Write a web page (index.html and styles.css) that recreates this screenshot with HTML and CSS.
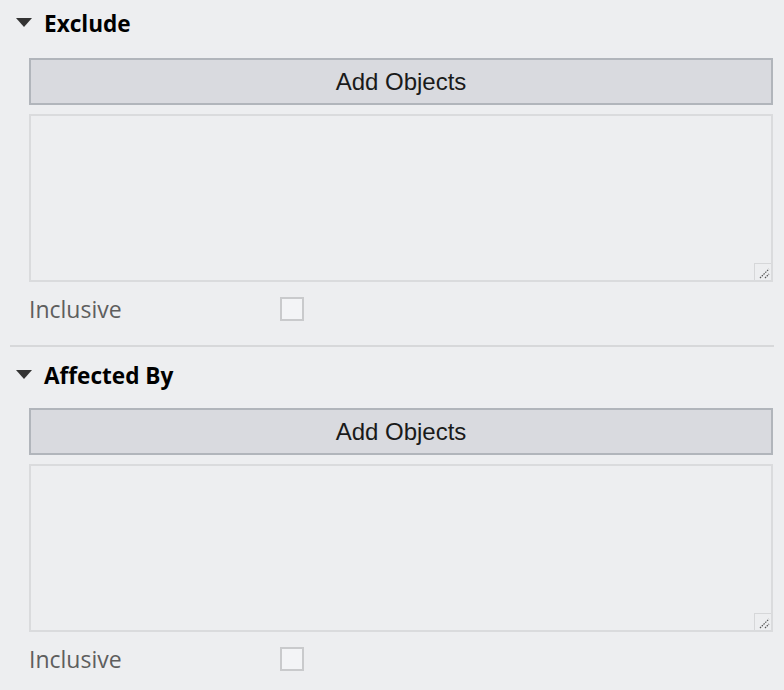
FILE: index.html
```html
<!DOCTYPE html>
<html>
<head>
<meta charset="utf-8">
<link rel="stylesheet" href="styles.css">
</head>
<body>
<div class="panel">
  <section class="group">
    <div class="group-head">
      <span class="caret"></span>
      <span class="group-title">Exclude</span>
    </div>
    <div class="group-body">
      <button class="add-btn">Add Objects</button>
      <div class="list-box">
        <span class="grip"><svg width="16" height="16" viewBox="0 0 16 16"><path d="M5 14 L14 5 M10 14 L14 10" stroke="#555" stroke-width="1.2" stroke-dasharray="1.5 1"/></svg></span>
      </div>
      <div class="opt-row">
        <span class="opt-label">Inclusive</span>
        <span class="check"></span>
      </div>
    </div>
  </section>
  <div class="divider"></div>
  <section class="group second">
    <div class="group-head">
      <span class="caret"></span>
      <span class="group-title">Affected By</span>
    </div>
    <div class="group-body">
      <button class="add-btn">Add Objects</button>
      <div class="list-box">
        <span class="grip"><svg width="16" height="16" viewBox="0 0 16 16"><path d="M5 14 L14 5 M10 14 L14 10" stroke="#555" stroke-width="1.2" stroke-dasharray="1.5 1"/></svg></span>
      </div>
      <div class="opt-row">
        <span class="opt-label">Inclusive</span>
        <span class="check"></span>
      </div>
    </div>
  </section>
</div>
</body>
</html>
```
FILE: styles.css
```css
html, body {
  margin: 0;
  padding: 0;
  background: #edeef0;
  width: 784px;
  height: 690px;
  overflow: hidden;
}
.panel {
  display: flex;
  flex-direction: column;
}
.group-head {
  height: 46px;
  display: flex;
  align-items: center;
  padding-left: 16px;
}
.second .group-head {
  height: 56px;
}
.caret {
  width: 0;
  height: 0;
  border-left: 8px solid transparent;
  border-right: 8px solid transparent;
  border-top: 9px solid #333;
  margin-right: 12px;
  margin-top: -2px;
}
.group-title {
  font-family: "Open Sans", sans-serif;
  font-weight: 700;
  font-size: 22.6px;
  color: #000;
}
.group-body {
  padding: 12px 11px 0 29px;
  display: flex;
  flex-direction: column;
}
.second .group-body {
  padding-top: 5px;
}
.add-btn {
  height: 47px;
  margin: 0;
  border: 2px solid #b1b5bb;
  background: #d9dadf;
  font-family: "Liberation Sans", Arial, sans-serif;
  font-size: 24px;
  color: #1a1a1a;
  padding: 0;
}
.list-box {
  position: relative;
  margin-top: 9px;
  height: 168px;
  box-sizing: border-box;
  border: 2px solid #dadbdd;
  background: #edeef0;
}
.grip {
  position: absolute;
  right: 0;
  bottom: 0;
  width: 16px;
  height: 16px;
  border-left: 1px solid #d6d7d9;
  border-top: 1px solid #d6d7d9;
  display: block;
}
.grip svg { display: block; }
.opt-row {
  display: flex;
  align-items: center;
  margin-top: 15px;
  height: 24px;
}
.opt-label {
  font-family: "Open Sans", sans-serif;
  font-size: 23px;
  color: #5e5e5e;
  width: 251px;
}
.check {
  width: 24px;
  height: 24px;
  box-sizing: border-box;
  border: 2px solid #c9cacc;
  background: #f3f4f6;
}
.divider {
  margin: 24px 10px 0 10px;
  height: 2px;
  background: #d7d8da;
}
```
